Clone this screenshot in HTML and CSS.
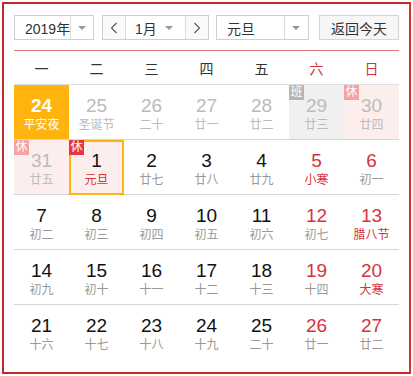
FILE: index.html
```html
<!DOCTYPE html>
<html lang="zh-CN">
<head>
    <meta charset="UTF-8">
    <title>万年历</title>
    <link rel="stylesheet" href="styles.css">
</head>

<body>
    <div class="calendar">
        <div class="toolbar">
            <div class="select year-select">
                <span class="select-text">2019年</span>
                <span class="select-arrow"><i class="caret"></i></span>
            </div>
            <div class="month-group">
                <span class="nav-btn">
                    <svg width="8" height="12" viewBox="0 0 8 12"><path d="M6.5 1 L1.5 6 L6.5 11" fill="none" stroke="#555" stroke-width="1.1"/></svg>
                </span>
                <div class="month-select">
                    <span class="select-text">1月</span>
                    <i class="caret"></i>
                </div>
                <span class="nav-btn">
                    <svg width="8" height="12" viewBox="0 0 8 12"><path d="M1.5 1 L6.5 6 L1.5 11" fill="none" stroke="#555" stroke-width="1.1"/></svg>
                </span>
            </div>
            <div class="select holiday-select">
                <span class="select-text">元旦</span>
                <span class="select-arrow"><i class="caret"></i></span>
            </div>
            <button class="today-btn">返回今天</button>
        </div>

        <div class="weekdays">
            <span>一</span><span>二</span><span>三</span><span>四</span><span>五</span>
            <span class="weekend">六</span><span class="weekend">日</span>
        </div>

        <div class="days">
            <div class="day other today"><b>24</b><small>平安夜</small></div>
            <div class="day other"><b>25</b><small>圣诞节</small></div>
            <div class="day other"><b>26</b><small>二十</small></div>
            <div class="day other"><b>27</b><small>廿一</small></div>
            <div class="day other"><b>28</b><small>廿二</small></div>
            <div class="day other work"><em class="badge">班</em><b>29</b><small>廿三</small></div>
            <div class="day other rest"><em class="badge">休</em><b>30</b><small>廿四</small></div>

            <div class="day other rest"><em class="badge">休</em><b>31</b><small>廿五</small></div>
            <div class="day rest selected"><em class="badge">休</em><b>1</b><small class="fest">元旦</small></div>
            <div class="day"><b>2</b><small>廿七</small></div>
            <div class="day"><b>3</b><small>廿八</small></div>
            <div class="day"><b>4</b><small>廿九</small></div>
            <div class="day weekend"><b>5</b><small class="fest">小寒</small></div>
            <div class="day weekend"><b>6</b><small>初一</small></div>

            <div class="day"><b>7</b><small>初二</small></div>
            <div class="day"><b>8</b><small>初三</small></div>
            <div class="day"><b>9</b><small>初四</small></div>
            <div class="day"><b>10</b><small>初五</small></div>
            <div class="day"><b>11</b><small>初六</small></div>
            <div class="day weekend"><b>12</b><small>初七</small></div>
            <div class="day weekend"><b>13</b><small class="fest">腊八节</small></div>

            <div class="day"><b>14</b><small>初九</small></div>
            <div class="day"><b>15</b><small>初十</small></div>
            <div class="day"><b>16</b><small>十一</small></div>
            <div class="day"><b>17</b><small>十二</small></div>
            <div class="day"><b>18</b><small>十三</small></div>
            <div class="day weekend"><b>19</b><small>十四</small></div>
            <div class="day weekend"><b>20</b><small class="fest">大寒</small></div>

            <div class="day last"><b>21</b><small>十六</small></div>
            <div class="day last"><b>22</b><small>十七</small></div>
            <div class="day last"><b>23</b><small>十八</small></div>
            <div class="day last"><b>24</b><small>十九</small></div>
            <div class="day last"><b>25</b><small>二十</small></div>
            <div class="day last weekend"><b>26</b><small>廿一</small></div>
            <div class="day last weekend"><b>27</b><small>廿二</small></div>
        </div>
    </div>
</body>
</html>
```

FILE: styles.css
```css
body {
    margin: 0;
    background: #fff;
    font-family: "Liberation Sans", "Noto Sans CJK SC", sans-serif;
    color: #333;
}

.calendar {
    margin: 2px;
    width: 385px;
    height: 346px;
    padding: 11px 10px 11px 10px;
    border: 2px solid #c4282b;
    border-right-color: #e0302d;
}

.toolbar {
    display: flex;
    align-items: center;
    height: 25px;
    padding-bottom: 10px;
    border-bottom: 1px solid #e07a7a;
    white-space: nowrap;
}

.select {
    display: flex;
    height: 23px;
    border: 1px solid #cfcfcf;
    background: #fff;
    font-size: 14px;
}

.select-text {
    display: flex;
    flex: 1;
    align-items: center;
    padding-left: 10px;
}

.select-arrow {
    display: flex;
    align-items: center;
    justify-content: center;
    width: 23px;
    border-left: 1px solid #dcdcdc;
}

.caret {
    width: 0;
    height: 0;
    border-left: 4px solid transparent;
    border-right: 4px solid transparent;
    border-top: 4px solid #999;
}

.year-select { width: 78px; }

.month-group {
    display: flex;
    height: 23px;
    margin-left: 8px;
    border: 1px solid #cfcfcf;
}

.nav-btn {
    display: flex;
    align-items: center;
    justify-content: center;
    width: 22px;
    background: #fafafa;
}

.month-select {
    display: flex;
    align-items: center;
    width: 59px;
    border-left: 1px solid #dcdcdc;
    border-right: 1px solid #dcdcdc;
    font-size: 14px;
}

.month-select .select-text {
    flex: none;
    width: 30px;
    padding-left: 9px;
}

.holiday-select {
    width: 92px;
    margin-left: 7px;
}

.today-btn {
    width: 81px;
    height: 25px;
    margin-left: 10px;
    border: 1px solid #d4d4d4;
    background: #f6f6f6;
    color: #333;
    font-family: inherit;
    font-size: 14px;
    padding: 0;
}

.weekdays {
    display: grid;
    grid-template-columns: repeat(7, 55px);
    height: 33px;
    align-items: center;
    font-size: 14px;
    color: #333;
    text-align: center;
    border-bottom: 1px solid #ddd;
}

.weekdays .weekend { color: #d4333a; }

.days {
    display: grid;
    grid-template-columns: repeat(7, 55px);
    grid-auto-rows: 55px;
}

.day {
    position: relative;
    display: flex;
    flex-direction: column;
    align-items: center;
    padding-top: 10px;
    box-sizing: border-box;
    border-bottom: 1px solid #d6d6d6;
}

.day.last { border-bottom: none; }

.day b {
    font-weight: normal;
    font-size: 19px;
    line-height: 22px;
    color: #111;
}

.day small {
    font-size: 12px;
    line-height: 17px;
    color: #999;
}

.day.weekend b { color: #d4333a; }
.day small.fest { color: #d4333a; }

.day.other b,
.day.other small { color: #bbb; }

.day.today {
    background: #ffb30f;
}

.day.today b,
.day.today small { color: #fff; }

.day.today b { font-weight: bold; }

.day.rest { background: #fdeeee; }
.day.work { background: #f0f0f0; }

.day.selected {
    border: 2px solid #ffb30f;
    padding-top: 8px;
}

.badge {
    position: absolute;
    top: 0;
    left: 0;
    width: 15px;
    height: 15px;
    line-height: 15px;
    text-align: center;
    font-style: normal;
    font-size: 12px;
    color: #fff;
    background: #e4393c;
}

.other .badge { background: #f3a3a3; }
.work .badge { background: #b5b5b5; }
.selected .badge { top: -2px; left: -2px; }
```
